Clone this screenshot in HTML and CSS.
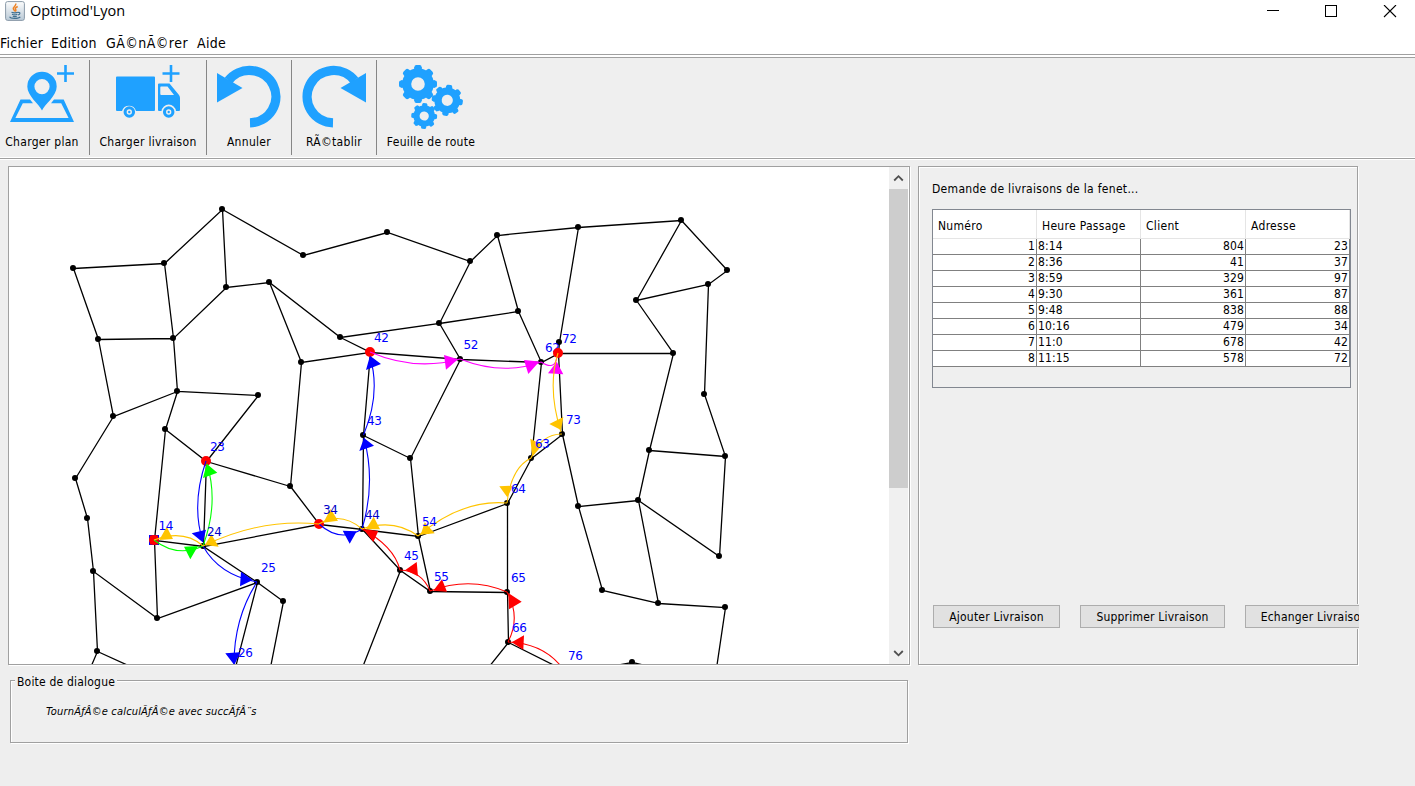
FILE: index.html
```html
<!DOCTYPE html>
<html lang="fr">
<head>
<meta charset="utf-8">
<title>Optimod'Lyon</title>
<link rel="stylesheet" href="styles.css">
</head>
<body>
<header class="titlebar">
  <svg class="java" width="20" height="20" viewBox="0 0 20 20">
    <defs><linearGradient id="jb" x1="0" y1="0" x2="0" y2="1"><stop offset="0" stop-color="#fdfdfd"/><stop offset="1" stop-color="#b9c9d6"/></linearGradient></defs>
    <rect x=".6" y=".6" width="18.8" height="18.8" rx="2" fill="url(#jb)" stroke="#8a9aa8"/>
    <path d="M10.600 2.500C12 4.500 7.600 6 8.300 7.800 8.600 8.800 9.800 9.400 9.500 10.500M12.700 5.500C10 6.800 9.900 7.500 10.700 8.500 11.300 9.300 10.700 9.900 10.300 10.500" fill="none" stroke="#ee8224" stroke-width="1.500"/>
    <path d="M6.500 11.300C8 12.100 11.500 12 12.800 11.300M7 13.300C8.500 14 11 14 12.300 13.300M7.800 15.200C9 15.700 10.500 15.700 11.800 15.200M13 11.500C15.500 10.800 15.600 13.200 12.900 14M4.600 15.800C5.500 17.800 13.500 17.900 15.300 15.800" fill="none" stroke="#41708f" stroke-width="1.200"/>
  </svg>
  <h1 class="title">Optimod'Lyon</h1>
  <svg class="winctl" width="130" height="14" viewBox="0 0 130 14" shape-rendering="crispEdges">
    <path d="M0 5.500H12M58.500.5H69.500V11.500H58.500Z" fill="none" stroke="#000"/>
    <path d="M117 0L129 12M129 0L117 12" stroke="#000" stroke-width="1.100" shape-rendering="auto"/>
  </svg>
</header>
<nav class="menu"><span class="m1">Fichier</span><span class="m2">Edition</span><span class="m3">GÃ©nÃ©rer</span><span class="m4">Aide</span></nav>
<div class="toolbar">
  <div class="tool t1">
    <svg width="64" height="64" viewBox="0 0 64 64">
      <path d="M47 8.500H64M55.500 0V17" stroke="#1fa1ff" stroke-width="2.600"/>
      <path fill="#1fa1ff" fill-rule="evenodd" d="M32 45.500C29 39 17.300 31 17.300 21.500A14.700 14.700 0 0 1 46.700 21.500C46.700 31 35 39 32 45.500ZM32 14A7.600 7.600 0 1 0 32 29.200A7.600 7.600 0 1 0 32 14Z"/>
      <path fill="#1fa1ff" fill-rule="evenodd" d="M10.500 34.500H20L23 38.300H12.800L5.400 53H58.600L51.200 38.300H41L44 34.500H53.700L64 57H0Z"/>
    </svg><span>Charger plan</span>
  </div>
  <div class="tool t2">
    <svg width="64" height="64" viewBox="0 0 64 64">
      <path d="M46.500 8.500H63.500M55 0V17" stroke="#1fa1ff" stroke-width="2.600"/>
      <path fill="#1fa1ff" fill-rule="evenodd" d="M1 11.500H38Q39 11.500 39 12.500V45Q39 46 38 46H20A7.300 7.300 0 0 0 6 46H1Q0 46 0 45V12.500Q0 11.500 1 11.500ZM43 18.500H53.500L63 30Q64 31.500 64 33V45Q64 46 63 46H60A7.300 7.300 0 0 0 45.500 46H43Q42 46 42 45V19.500Q42 18.500 43 18.500ZM45 21.500Q44.300 21.500 44.300 22.500V29Q44.300 30 45.300 30H58L51.500 21.500Z"/>
      <circle cx="13.300" cy="47" r="4.200" fill="none" stroke="#1fa1ff" stroke-width="3.100"/><circle cx="13.300" cy="47" r="1.200" fill="#1fa1ff"/>
      <circle cx="52.700" cy="47" r="4.200" fill="none" stroke="#1fa1ff" stroke-width="3.100"/><circle cx="52.700" cy="47" r="1.200" fill="#1fa1ff"/>
    </svg><span>Charger livraison</span>
  </div>
  <div class="tool t3">
    <svg width="64" height="64" viewBox="0 0 64 64">
      <path d="M33 57.800A26.500 26.200 0 1 0 11.500 15.500" fill="none" stroke="#1fa1ff" stroke-width="9.300"/>
      <path d="M0 8L25.500 23L0 37.500Z" fill="#1fa1ff"/>
    </svg><span>Annuler</span>
  </div>
  <div class="tool t4">
    <svg width="64" height="64" viewBox="0 0 64 64">
      <path d="M31 57.800A26.500 26.200 0 1 1 52.500 15.500" fill="none" stroke="#1fa1ff" stroke-width="9.300"/>
      <path d="M64 8L38.500 23L64 37.500Z" fill="#1fa1ff"/>
    </svg><span>RÃ©tablir</span>
  </div>
  <div class="tool t5">
    <svg width="64" height="64" viewBox="0 0 64 64">
      <defs><g id="gear" fill="none" stroke="#1fa1ff">
        <circle r="11.300" stroke-width="9"/>
        <path stroke-width="7.600" d="M0-13V-17M0 13V17M-13 0H-17M13 0H17M9.500-9.500L12-12M-9.500-9.500L-12-12M9.500 9.500L12 12M-9.500 9.500L-12 12"/>
        <path stroke-width="4" stroke-linecap="round" d="M-1.600-17H1.600M-1.600 17H1.600M-17-1.600V1.600M17-1.600V1.600M10.900-13.100L13.100-10.900M-10.900-13.100L-13.100-10.900M10.900 13.100L13.100 10.900M-10.900 13.100L-13.100 10.900"/>
      </g></defs>
      <use href="#gear" transform="translate(19 19)"/>
      <use href="#gear" transform="translate(48.300 35.300) rotate(8) scale(.82)"/>
      <use href="#gear" transform="translate(25.200 51) rotate(3) scale(.68)"/>
    </svg><span>Feuille de route</span>
  </div>
</div>
<main class="work">
  <div class="left">
    <section class="mapPane">
      <svg class="map" width="880" height="497" viewBox="9 167 880 497">
        <path class="road" d="M73 268L164 263L222 209L303 255L387 232L470 261L497 235L578 227L681 220L727 270L708 284L636 300L681 220M636 300L673 353L649 450L638 500L719 556L725 456L704 394L708 284M725 456L649 450M638 500L578 506L602 590L658 603L638 500M658 603L725 607L716 668M222 209L226 287L269 282L340 337L439 323L470 261M226 287L173 338L164 263M73 268L98 339L173 338L177 391L258 395L206 461L165 429L177 391L113 416L98 339M269 282L301 362L370 352L340 337M439 323L518 311L497 235M439 323L460 359L370 352M460 359L541 362L558 353L559 342L578 227M518 311L541 362L531 458L562 434L558 353H673M531 458L507 503V592L430 591L400 570L362 529M562 434L578 506M301 362L290 486L206 461L203 546L154 540L165 429M290 486L319 524L203 546L257 582L157 618L154 540M157 618L93 571L87 518L75 478L113 416M93 571L97 651L91 665M97 651L130 666M257 582L283 601L270 667M257 582L235 667M319 524L362 529L363 435L370 352M363 435L410 458L460 359M410 458L418 536L362 529M418 536L507 503M418 536L430 591M400 570L362 667M507 592L508 642L488 667M508 642L556 666M615 665L632 662L645 665"/>
        <path class="node" d="M73 268h0M164 263h0M222 209h0M303 255h0M387 232h0M470 261h0M497 235h0M578 227h0M681 220h0M727 270h0M708 284h0M636 300h0M673 353h0M704 394h0M725 456h0M649 450h0M638 500h0M719 556h0M578 506h0M602 590h0M658 603h0M725 607h0M632 662h0M226 287h0M269 282h0M98 339h0M173 338h0M340 337h0M439 323h0M518 311h0M559 342h0M301 362h0M460 359h0M541 362h0M177 391h0M258 395h0M113 416h0M165 429h0M363 435h0M410 458h0M531 458h0M562 434h0M75 478h0M290 486h0M87 518h0M203 546h0M362 529h0M418 536h0M507 503h0M93 571h0M257 582h0M157 618h0M283 601h0M400 570h0M430 591h0M507 592h0M508 642h0M97 651h0"/>
        <text class="num" x="545" y="352">62</text>
        <path d="M149 535h10v10h-10z" fill="#00f"/>
        <path class="stop" d="M154 540h0M206 461h0M370 352h0M558 353h0M319 524h0"/>
        <path d="M150 535.500h8v9h-8z" fill="red"/>
        <g class="route green"><path d="M154 540Q177 558 203 546M203 546Q219 503 207 464"/><path class="tip" d="M184 546.700L198 546L190.300 559.300ZM206.700 463.700L203 478L217.300 472.700Z"/></g>
        <g class="route blue"><path d="M206 461Q191 505 203 542M203 546Q219 575 257 582M257 582Q234 618 234 664M319 524Q340 543 362 529M362 529Q376 483 364 438M363.500 435Q381 393 370 357"/><path class="tip" d="M191.700 533.300L206 529.700L202.700 542.300ZM241 571.700L252.700 580L240 586.300ZM225.300 653.300L240.300 652.300L234.300 665ZM342.700 530.700L356.700 531.300L349.700 543.700ZM364 438L359.300 451L374 445.700ZM370 355.700L366 370L381 364Z"/></g>
        <g class="route pink"><path d="M370 352Q415 371.500 460 359M460 359Q503 376 541 362M541 362Q555 371 557 357"/><path class="tip" d="M444 355L458 359.300L446 369.700ZM524 360L539.300 361.500L528.300 374ZM556.700 361.700L548 373.300L563.300 374.300Z"/></g>
        <g class="route red"><path d="M560 665Q541 643 508 642M508 642Q521 617 507 592M507 592Q470 576 430 591M430 591Q422 571 400 570M400 570Q394 546 362 529"/><path class="tip" d="M511.700 642.300L524 635.300L523.300 649.700ZM508.300 593L521.700 601.700L509 609.300ZM442 579.300L433.300 590.700L447 591.700ZM405.300 570L416.700 562L418 576.300ZM363.300 529L378.300 531L373.300 542Z"/></g>
        <g class="route gold"><path d="M558 353Q547 388 561 432M562 434Q541 434 531 458M531 458Q511 468 507 503M507 503Q462 499 418 536M418 536Q394 518 362 529M362 529Q341 511 319 524M319 524Q261 518 203 546M203 546Q184 529 154 540"/><path class="tip" d="M549.300 424L563.300 417L561 430ZM530.300 438.700L542.300 445L532.300 456.700ZM499.300 486.300L513 485.700L507.300 497.300ZM424.700 522.300L420.700 534.700L434.700 533.300ZM373.700 516.700L366 529.300L380 529.300ZM330.700 509L323.300 522.700L338 520.700ZM205 545L211.300 534.300L218.700 546.700ZM166.700 526.700L159.300 540L173 539Z"/></g>
        <g class="num">
          <text x="374" y="342">42</text><text x="463.500" y="349">52</text><text x="562" y="343">72</text>
          <text x="210" y="451">23</text><text x="158.500" y="530">14</text><text class="dark" x="207" y="536">24</text>
          <text x="261" y="572">25</text><text x="238" y="657">26</text><text x="367" y="425">43</text><text x="566" y="424">73</text>
          <text x="535" y="448">63</text><text x="511" y="493">64</text><text class="dark" x="323" y="514">34</text>
          <text class="dark" x="365" y="519">44</text><text x="422" y="526">54</text><text x="404" y="560">45</text>
          <text x="434" y="581">55</text><text x="511" y="582">65</text><text x="512" y="632">66</text><text x="568" y="660">76</text>
        </g>
      </svg>
      <div class="scroll">
        <svg width="19" height="22" viewBox="0 0 19 22"><path d="M5.200 13.500L9.500 9.200L13.800 13.500" fill="none" stroke="#505050" stroke-width="1.800"/></svg>
        <div class="thumb"></div>
        <svg class="down" width="19" height="22" viewBox="0 0 19 22"><path d="M5.200 9L9.500 13.300L13.800 9" fill="none" stroke="#505050" stroke-width="1.800"/></svg>
      </div>
    </section>
    <section class="dialog">
      <h2 class="legend">Boite de dialogue</h2>
      <p class="msg">TournÃƒÂ©e calculÃƒÂ©e avec succÃƒÂ¨s</p>
    </section>
  </div>
  <aside class="side">
    <h2 class="heading">Demande de livraisons de la fenet...</h2>
    <div class="tableBox">
      <table>
        <thead><tr><th>Numéro</th><th>Heure Passage</th><th>Client</th><th>Adresse</th></tr></thead>
        <tbody>
          <tr><td>1</td><td>8:14</td><td>804</td><td>23</td></tr>
          <tr><td>2</td><td>8:36</td><td>41</td><td>37</td></tr>
          <tr><td>3</td><td>8:59</td><td>329</td><td>97</td></tr>
          <tr><td>4</td><td>9:30</td><td>361</td><td>87</td></tr>
          <tr><td>5</td><td>9:48</td><td>838</td><td>88</td></tr>
          <tr><td>6</td><td>10:16</td><td>479</td><td>34</td></tr>
          <tr><td>7</td><td>11:0</td><td>678</td><td>42</td></tr>
          <tr><td>8</td><td>11:15</td><td>578</td><td>72</td></tr>
        </tbody>
      </table>
    </div>
    <div class="actions"><button class="b1">Ajouter Livraison</button><button class="b2">Supprimer Livraison</button><button class="b3">Echanger Livraison</button></div>
  </aside>
</main>
</body>
</html>
```
FILE: styles.css
```css
* { box-sizing: border-box; }
body {
  margin: 0;
  width: 1415px;
  height: 786px;
  overflow: hidden;
  background: #eee;
  color: #000;
  font: 12px/16px "DejaVu Sans Condensed", "DejaVu Sans", sans-serif;
  font-stretch: condensed;
  letter-spacing: .3px;
}
h1, h2, p { margin: 0; font-size: inherit; font-weight: normal; }
svg { display: block; flex: none; }

.titlebar { display: flex; height: 30px; padding: 1px 20px 0 5px; background: #fff; }
.title { margin: 0 0 0 5px; font: 14.5px/20px "Open Sans", "Noto Sans", sans-serif; letter-spacing: -.05px; }
.winctl { margin: 4px -2px 0 auto; }
.menu {
  display: flex;
  height: 24px;
  padding-top: 3px;
  background: #fff;
  font-size: 14px;
  line-height: 20px;
  white-space: nowrap;
}
.m1 { width: 51px; }
.m2 { width: 55px; }
.m3 { width: 91px; }
.m3 { letter-spacing: .45px; }

.toolbar {
  display: flex;
  height: 106px;
  padding-top: 5px;
  border-top: 1px solid #a0a0a0;
  background: linear-gradient(#fff 0 2px, #a0a0a0 2px 3px, #efefef 3px 102px, #fff 102px 103px, #a0a0a0 103px 104px, #fff 104px);
}
.tool {
  display: flex;
  flex-direction: column;
  align-items: center;
  height: 95px;
  padding-top: 5px;
  border-right: 1px solid #868686;
  white-space: nowrap;
}
.tool span { margin-top: 5px; }
.t1 { width: 90px; padding-right: 5px; }
.t2 { width: 117px; }
.t3, .t4 { width: 85px; }
.t5 { width: 108px; border-right: 0; }

.work { display: flex; gap: 8px; padding: 6px 0 0 8px; }
.left { width: 902px; }
.mapPane {
  display: flex;
  height: 499px;
  border: 1px solid #a0a0a0;
  background: #fff;
  box-shadow: 1px 1px #fff;
}
.map { overflow: hidden; }
.road { fill: none; stroke: #000; stroke-width: 1.3; transform: translate(.5px, .5px); }
.node, .stop { fill: none; stroke: #000; stroke-width: 6; stroke-linecap: round; }
.stop { stroke: #f00; stroke-width: 10; }
.num { fill: #00f; font: 12px "DejaVu Sans", sans-serif; letter-spacing: -.3px; }
.dark { fill: #0000c8; }
.route { fill: none; stroke-width: 1.1; }
.route .tip { stroke: none; }
.green { stroke: #0f0; } .green .tip { fill: #0f0; }
.blue { stroke: #00f; } .blue .tip { fill: #00f; }
.pink { stroke: #f0f; } .pink .tip { fill: #f0f; }
.red { stroke: #f00; } .red .tip { fill: #f00; }
.gold { stroke: #ffc400; } .gold .tip { fill: #ffc400; }

.scroll { display: flex; flex-direction: column; width: 19px; background: #f0f0f0; }
.thumb { height: 299px; background: #cdcdcd; }
.down { margin-top: auto; }

.dialog {
  width: 898px;
  height: 63px;
  margin: 15px 0 0 2px;
  border: 1px solid #a0a0a0;
  background: #efefef;
  box-shadow: 1px 1px #fff, inset 1px 1px #fff;
}
.legend { width: max-content; margin: -7px 0 0 4px; padding: 0 2px; background: #efefef; letter-spacing: .2px; }
.msg { margin: 14px 0 0 35px; font-size: 11px; font-style: italic; letter-spacing: .17px; white-space: nowrap; }

.side {
  width: 440px;
  height: 499px;
  padding: 14px 0 0 13px;
  border: 1px solid #a0a0a0;
  background: #efefef;
  box-shadow: 1px 1px #fff, inset 1px 1px #fff;
}
.heading { height: 28px; }
.tableBox { width: 419px; height: 179px; border: 1px solid #828790; }
table { width: 417px; table-layout: fixed; border-collapse: separate; border-spacing: 0; }
th {
  height: 29px;
  padding: 3px 0 0 5px;
  border-right: 1px solid #e5e5e5;
  border-bottom: 1px solid #e5e5e5;
  background: #fff;
  text-align: left;
  font-weight: normal;
  white-space: nowrap;
}
th:nth-child(1), th:nth-child(2), th:nth-child(4) { width: 104px; }
th:nth-child(3) { width: 105px; }
td {
  height: 16px;
  padding: 0 1px;
  border-right: 1px solid #808080;
  border-bottom: 1px solid #808080;
  background: #fff;
  line-height: 15px;
  letter-spacing: .1px;
  text-align: right;
}
td:nth-child(2) { text-align: left; }

.actions { display: flex; width: 427px; height: 25px; margin-top: 216px; padding: 1px 0 1px 1px; overflow: hidden; background: #efefef; }
.actions button {
  flex: none;
  height: 23px;
  padding: 0;
  border: 1px solid #adadad;
  background: #e1e1e1;
  color: #000;
  font: inherit;
  letter-spacing: .2px;
  white-space: nowrap;
}
.actions .b1 { width: 127px; margin-right: 20px; }
.actions .b2 { width: 145px; margin-right: 20px; }
.actions .b3 { width: 138px; }
```
